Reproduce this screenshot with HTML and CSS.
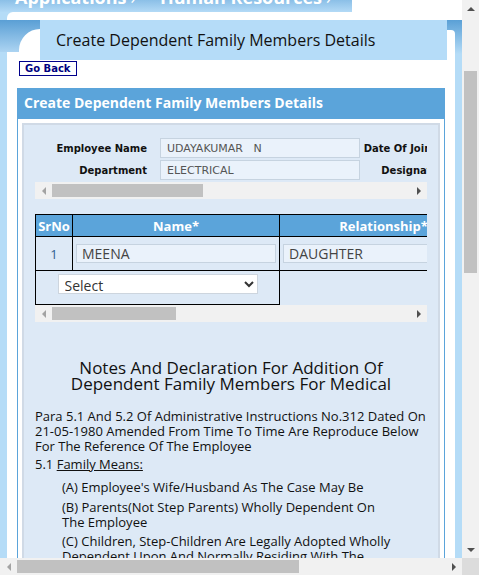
FILE: index.html
```
<!DOCTYPE html>
<html lang="en">
<head>
<meta charset="utf-8">
<title>Create Dependent Family Members Details</title>
<link rel="stylesheet" href="styles.css">
</head>
<body>
<div class="window">
  <div class="viewport" id="viewport">
    <div class="page">
      <header class="banner">
        <div class="banner-title">Human Resource Management System</div>
      </header>
      <nav class="menubar">
        <span class="menu-item">Applications<span class="sep">›</span></span>
        <span class="menu-item">Human Resources<span class="sep">›</span></span>
      </nav>
      <div class="frame">
        <div class="frame-top"><div class="frame-top-inner"></div></div>
        <div class="title-row">
          <svg class="corner-l" width="40" height="40" viewBox="0 0 40 40">
            <defs>
              <linearGradient id="gl" x1="0" y1="0" x2="0" y2="1">
                <stop offset="0" stop-color="#5a9fd5"/>
                <stop offset="1" stop-color="#acd4f2"/>
              </linearGradient>
            </defs>
            <rect width="40" height="32" fill="url(#gl)"/>
            <rect y="32" width="7" height="8" fill="#b5dcf7"/>
            <path d="M40 9A21 21 0 0 0 19 30V32H7V40H40Z" fill="#fff"/>
          </svg>
          <h1 class="page-title">Create Dependent Family Members Details</h1>
          <svg class="corner-r" width="15" height="40" viewBox="0 0 15 40">
            <defs>
              <linearGradient id="gr" x1="0" y1="0" x2="0" y2="1">
                <stop offset="0" stop-color="#5aa0d6"/>
                <stop offset="0.85" stop-color="#b5dcf7"/>
                <stop offset="1" stop-color="#b5dcf7"/>
              </linearGradient>
            </defs>
            <rect width="15" height="40" fill="url(#gr)"/>
            <path d="M0 10H4A4 4 0 0 1 8 14V40H0Z" fill="#fff"/>
          </svg>
        </div>
        <div class="frame-body">
          <div class="toolbar"><a class="go-back" href="#">Go Back</a></div>
          <section class="panel">
            <h2 class="panel-head">Create Dependent Family Members Details</h2>
            <div class="panel-inner">
              <div class="clip emp-wrap">
                <table class="emp">
                  <colgroup>
                    <col class="c-l1"><col class="c-v"><col class="c-l2"><col class="c-v"><col class="c-l3"><col class="c-v">
                  </colgroup>
                  <tr>
                    <td class="lbl">Employee Name</td>
                    <td class="val"><input class="field" value="UDAYAKUMAR   N" readonly></td>
                    <td class="lbl lbl2">Date Of Joining</td>
                    <td class="val"><input class="field" value="01-06-1998" readonly></td>
                    <td class="lbl lbl2">Employee No</td>
                    <td class="val"><input class="field" value="104532" readonly></td>
                  </tr>
                  <tr>
                    <td class="lbl">Department</td>
                    <td class="val"><input class="field" value="ELECTRICAL" readonly></td>
                    <td class="lbl lbl2">Designation</td>
                    <td class="val"><input class="field" value="TECHNICIAN" readonly></td>
                    <td class="lbl lbl2">Grade</td>
                    <td class="val"><input class="field" value="G-4" readonly></td>
                  </tr>
                </table>
              </div>
              <div class="sbar sbar-h">
                <span class="arr arr-l off"></span>
                <span class="thumb thumb-emp"></span>
                <span class="rest"></span>
                <span class="arr arr-r"></span>
              </div>

              <div class="clip grid-wrap">
                <table class="grid">
                  <colgroup>
                    <col class="g-no"><col class="g-name"><col class="g-rel"><col class="g-dob"><col class="g-age"><col class="g-sex"><col class="g-rem">
                  </colgroup>
                  <tr>
                    <th>SrNo</th>
                    <th>Name*</th>
                    <th>Relationship*</th>
                    <th>Date Of Birth*</th>
                    <th>Age</th>
                    <th>Gender*</th>
                    <th>Remarks</th>
                  </tr>
                  <tr>
                    <td class="no">1</td>
                    <td><input class="cell-input" value="MEENA" readonly></td>
                    <td><input class="cell-input" value="DAUGHTER" readonly></td>
                    <td><input class="cell-input" value="12-04-2004" readonly></td>
                    <td class="no">19</td>
                    <td><input class="cell-input short" value="FEMALE" readonly></td>
                    <td></td>
                  </tr>
                  <tr>
                    <td class="sel-cell" colspan="2">
                      <select class="select">
                        <option>Select</option>
                        <option>Wife</option>
                        <option>Husband</option>
                        <option>Son</option>
                        <option>Daughter</option>
                      </select>
                    </td>
                    <td class="empty" colspan="5"></td>
                  </tr>
                </table>
              </div>
              <div class="sbar sbar-h">
                <span class="arr arr-l off"></span>
                <span class="thumb thumb-grid"></span>
                <span class="rest"></span>
                <span class="arr arr-r"></span>
              </div>

              <div class="notes">
                <h3 class="notes-title">Notes And Declaration For Addition Of<br>Dependent Family Members For Medical</h3>
                <p class="para">Para 5.1 And 5.2 Of Administrative Instructions No.312 Dated On 21-05-1980 Amended From Time To Time Are Reproduce Below For The Reference Of The Employee</p>
                <p class="para fam">5.1 <u>Family Means:</u></p>
                <ul class="family">
                  <li>(A) Employee's Wife/Husband As The Case May Be</li>
                  <li>(B) Parents(Not Step Parents) Wholly Dependent On The Employee</li>
                  <li>(C) Children, Step-Children Are Legally Adopted Wholly Dependent Upon And Normally Residing With The Employee</li>
                  <li>(D) Unmarried Sisters And Minor Brothers Wholly Dependent On The Employee</li>
                </ul>
                <p class="para fam">5.2 <u>Dependent Means:</u></p>
                <ul class="family">
                  <li>A Member Of The Family Whose Monthly Income From All Sources Does Not Exceed The Limit Prescribed From Time To Time</li>
                </ul>
                <label class="declare"><input type="checkbox"> I Hereby Declare That The Above Particulars Are True And Correct</label>
                <div class="buttons">
                  <button class="btn" type="button">Submit</button>
                  <button class="btn" type="button">Reset</button>
                </div>
              </div>
            </div>
          </section>
        </div>
      </div>
    </div>
  </div>

  <div class="sbar sbar-v">
    <span class="arr arr-u"></span>
    <span class="lead lead-v"></span>
    <span class="thumb thumb-v"></span>
    <span class="rest"></span>
    <span class="arr arr-d"></span>
  </div>
  <div class="sbar sbar-h sbar-win">
    <span class="arr arr-l off"></span>
    <span class="thumb thumb-win"></span>
    <span class="rest"></span>
    <span class="arr arr-r"></span>
  </div>
  <div class="sbar-corner"></div>
</div>
<script src="script.js"></script>
</body>
</html>
```
FILE: styles.css
```
* { box-sizing: border-box; }
html, body { margin: 0; padding: 0; overflow: hidden; }
body { font-family: "Open Sans", "Noto Sans", sans-serif; background: #fff; color: #111; }

/* browser window: viewport + scrollbars */
.window {
  display: grid;
  grid-template-columns: 462px 17px;
  grid-template-rows: 558px 17px;
  width: 479px;
  height: 575px;
}
.viewport { overflow: hidden; background: #fff; }

.sbar { display: flex; background: #f1f1f1; }
.sbar-v { flex-direction: column; }
.sbar .rest { flex: 1; }
.sbar .thumb { background: #c1c1c1; flex: none; }
.sbar-h { height: 17px; }
.sbar-h .thumb { margin: 2px 0; }
.sbar-v .thumb { margin: 0 2px; }
.sbar-corner { background: #dcdcdc; }
.lead-v { height: 54px; flex: none; }
.thumb-v { height: 202px; }
.thumb-win { width: 282px; }
.thumb-emp { width: 151px; }
.thumb-grid { width: 124px; }

.arr { width: 17px; height: 17px; flex: none; display: flex; align-items: center; justify-content: center; }
.arr::before { content: ""; width: 0; height: 0; }
.arr-l::before { border-right: 4px solid #505050; border-top: 4px solid transparent; border-bottom: 4px solid transparent; }
.arr-r::before { border-left: 4px solid #505050; border-top: 4px solid transparent; border-bottom: 4px solid transparent; }
.arr-u::before { border-bottom: 4px solid #505050; border-left: 4px solid transparent; border-right: 4px solid transparent; }
.arr-d::before { border-top: 4px solid #505050; border-left: 4px solid transparent; border-right: 4px solid transparent; }
.arr-l.off::before { border-right-color: #a3a3a3; }

/* page */
.page { width: 701px; }

.banner {
  height: 131px;
  display: flex;
  align-items: center;
  padding-left: 20px;
  background: linear-gradient(#2b6ca8, #4f97d1);
  color: #fff;
  font: 700 22px "Open Sans", sans-serif;
}

.menubar {
  width: 352px;
  height: 30px;
  display: flex;
  padding-left: 15px;
  background: linear-gradient(#4f97d1, #b3daf6);
  color: #fff;
  font: 700 18px/30px "Open Sans", sans-serif;
  white-space: nowrap;
}
.menu-item { margin-right: 24px; }
.sep { margin-left: 4px; font-weight: 400; }

.frame { width: 462px; }
.frame-top { height: 8px; background: linear-gradient(to right, #b5dcf7 20px, #fff 20px); }
.frame-top-inner { margin-left: 7px; height: 8px; background: #fff; border-top-left-radius: 6px; }

.title-row { display: flex; height: 40px; }
.corner-l, .corner-r { display: block; flex: none; }
.page-title {
  flex: 1;
  margin: 0;
  padding-left: 16px;
  background: #b5dcf8;
  color: #111;
  font: 400 16px/40px "Open Sans", sans-serif;
  white-space: nowrap;
}

.frame-body {
  background: #fff;
  border-left: 7px solid #b5dcf7;
  border-right: 7px solid #b5dcf7;
  padding: 1px 10px 20px;
}

.toolbar { display: flex; padding-left: 2px; }
.go-back {
  display: block;
  height: 15px;
  padding: 0 5px;
  border: 1px solid #00008b;
  background: #fff;
  color: #000080;
  font: 700 10px/13px "DejaVu Sans", sans-serif;
  text-decoration: none;
}

.panel { margin-top: 12px; border: 1px solid #5ba4da; background: #fff; }
.panel-head {
  margin: 0;
  height: 30px;
  padding: 0 0 3px 6px;
  background: #5ba4da;
  color: #fff;
  font: 700 14px/27px "Open Sans", sans-serif;
  white-space: nowrap;
}
.panel-inner {
  margin: 4px;
  border: 2px solid #d0dae6;
  background: #dde9f6;
  padding: 12px 11px 30px;
}

.clip { overflow: hidden; }
.emp-wrap { padding-bottom: 1px; }

.emp { table-layout: fixed; width: 929px; border-collapse: collapse; }
.c-l1 { width: 117px; }
.c-l2 { width: 92px; }
.c-l3 { width: 96px; }
.c-v { width: 208px; }
.emp td { height: 22px; padding: 0; vertical-align: middle; }
.emp .lbl {
  text-align: right;
  padding-right: 5px;
  color: #111;
  font: 700 10px "DejaVu Sans", sans-serif;
  white-space: nowrap;
  overflow: hidden;
}
.emp .lbl2 { padding-right: 3px; }
.emp .val { padding-left: 8px; }
.field {
  display: block;
  width: 200px;
  height: 20px;
  margin: 0;
  padding: 0 6px;
  border: 1px solid #c6d3e0;
  background: #eaf2fb;
  color: #555;
  font: 11px "DejaVu Sans", sans-serif;
}

.grid-wrap { margin-top: 15px; }
.grid { table-layout: fixed; width: 1132px; border-collapse: collapse; }
.g-no { width: 37px; }
.g-name { width: 207px; }
.g-rel { width: 208px; }
.g-dob { width: 170px; }
.g-age { width: 60px; }
.g-sex { width: 150px; }
.g-rem { width: 300px; }
.grid th {
  height: 22px;
  padding: 0;
  border: 1px solid #000;
  background: #5ba4da;
  color: #fff;
  font: 700 13px "Open Sans", sans-serif;
  text-align: center;
  white-space: nowrap;
}
.grid td { height: 34px; padding: 0 3px; border: 1px solid #000; vertical-align: middle; }
.grid .no { text-align: center; color: #2f5f8f; font: 13px "Open Sans", sans-serif; }
.cell-input {
  display: block;
  width: 200px;
  height: 19px;
  margin: 0;
  padding: 0 5px;
  border: 1px solid #c6d3e0;
  background: #eaf2fb;
  color: #444;
  font: 14px "Open Sans", sans-serif;
}
.cell-input.short { width: 140px; }
.grid .sel-cell { height: 30px; padding: 3px 0 0; vertical-align: top; }
.grid .empty { border: none; }
.select {
  display: block;
  width: 200px;
  height: 20px;
  margin: 0 auto;
  padding: 0 2px;
  border: 1px solid #cdd5de;
  border-radius: 0;
  background: #fff;
  color: #333;
  font: 14px "Open Sans", sans-serif;
}

.notes { color: #111; }
.notes-title {
  margin: 38px 0 0;
  text-align: center;
  font: 400 17px/16px "Open Sans", sans-serif;
}
.para { margin: 17px 0 0; font: 13px/15px "Open Sans", sans-serif; }
.para.fam { margin-top: 3px; }
.family { list-style: none; margin: 8px 0 0; padding: 0 27px; font: 13px/15px "Open Sans", sans-serif; }
.family li + li { margin-top: 4.5px; }
.declare { display: block; margin-top: 16px; font: 700 13px/15px "Open Sans", sans-serif; }
.buttons { display: flex; justify-content: center; gap: 10px; margin-top: 16px; }
.btn {
  padding: 3px 14px;
  border: 1px solid #00008b;
  background: #fff;
  color: #000080;
  font: 700 11px "DejaVu Sans", sans-serif;
}
```
FILE: script.js
```
function placeView() {
  var vp = document.getElementById('viewport');
  if (vp) { vp.scrollTop = 149; vp.scrollLeft = 0; }
}
placeView();
window.addEventListener('load', placeView);
```
